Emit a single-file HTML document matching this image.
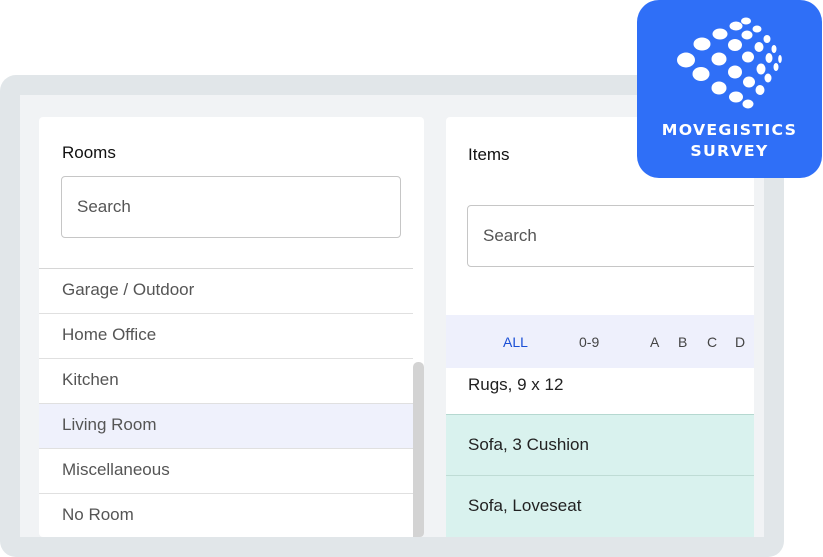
<!DOCTYPE html>
<html><head><meta charset="utf-8"><style>
*{margin:0;padding:0;box-sizing:border-box}
html,body{width:823px;height:557px;overflow:hidden}
body{background:#fff;position:relative;font-family:"Liberation Sans",Roboto,sans-serif}
.frame{position:absolute;left:0;top:75px;width:784px;height:482px;background:#e1e6e9;border-radius:16px}
.inner{position:absolute;left:20px;top:95px;width:744px;height:442px;background:#f1f3f5}
.card{position:absolute;background:#fff;border-radius:4px;overflow:hidden}
.l{left:39px;top:117px;width:385px;height:420px}
.r{left:446px;top:117px;width:308px;height:420px;border-radius:4px 0 0 0}
.t{position:absolute;font-size:17px;color:#111}
.search{position:absolute;border:1px solid #c6c6c6;border-radius:4px;font-size:17px;color:#555;padding-left:15px;display:flex;align-items:center}
.row{position:absolute;left:0;width:374px;height:45px;border-top:1px solid #e0e0e0;font-size:17px;color:#555;padding-left:23px;line-height:42px}
.sb{position:absolute;left:374px;top:245px;width:11px;height:180px;background:#d3d3d3;border-radius:5px 5px 0 0}
.f{position:absolute;top:198px;left:0;width:308px;height:53px;background:#eef0fc;font-size:14px;color:#444}
.f span{position:absolute;top:19px}
.ir{position:absolute;left:0;width:308px;font-size:17px;color:#222;padding-left:22px}
.logo{position:absolute;left:637px;top:0;width:185px;height:178px;background:#2f6ff7;border-radius:22px}
.lt{position:absolute;width:185px;text-align:center;color:#fff;font-weight:bold;font-size:15px;letter-spacing:1.2px;font-family:"DejaVu Sans","Liberation Sans",sans-serif;transform:scaleX(1.05)}
</style></head><body>
<div class="frame"></div>
<div class="inner"></div>
<div class="card l">
 <div class="t" style="left:23px;top:26px">Rooms</div>
 <div class="search" style="left:22px;top:59px;width:340px;height:62px">Search</div>
 <div class="row" style="top:151px;border-top-color:#d6d6d6">Garage / Outdoor</div>
 <div class="row" style="top:196px">Home Office</div>
 <div class="row" style="top:241px">Kitchen</div>
 <div class="row" style="top:286px;background:#eff1fc">Living Room</div>
 <div class="row" style="top:331px">Miscellaneous</div>
 <div class="row" style="top:376px">No Room</div>
 <div class="sb"></div>
</div>
<div class="card r">
 <div class="t" style="left:22px;top:28px">Items</div>
 <div class="search" style="left:21px;top:88px;width:300px;height:62px">Search</div>
 <div class="f"><span style="left:57px;color:#1a4fd6">ALL</span><span style="left:133px">0-9</span><span style="left:204px">A</span><span style="left:232px">B</span><span style="left:261px">C</span><span style="left:289px">D</span></div>
 <div class="ir" style="top:251px;height:47px;padding-top:7px">Rugs, 9 x 12</div>
 <div class="ir" style="top:297px;height:61px;background:#d9f2ee;border-top:1px solid #b5d8d0;line-height:60px">Sofa, 3 Cushion</div>
 <div class="ir" style="top:358px;height:62px;background:#d9f2ee;border-top:1px solid #bfdcd5;line-height:60px">Sofa, Loveseat</div>
</div>
<div class="logo">
<svg width="185" height="178" style="position:absolute;left:0;top:0" fill="#fff">
<g transform="translate(-637,0)">
<ellipse cx="686" cy="60" rx="9" ry="7.5"/>
<ellipse cx="702" cy="44" rx="8.5" ry="6.5"/><ellipse cx="701" cy="74" rx="8.5" ry="7"/>
<ellipse cx="720" cy="34" rx="7.5" ry="5.5"/><ellipse cx="719" cy="59" rx="7.5" ry="6.5"/><ellipse cx="719" cy="88" rx="7.5" ry="6.5"/>
<ellipse cx="736" cy="26" rx="6.5" ry="4.5"/><ellipse cx="735" cy="45" rx="7" ry="6"/><ellipse cx="735" cy="72" rx="7" ry="6.5"/><ellipse cx="736" cy="97" rx="7" ry="5.5"/>
<ellipse cx="746" cy="21" rx="5" ry="3.5"/><ellipse cx="747" cy="35" rx="5.5" ry="4.5"/><ellipse cx="748" cy="57" rx="6" ry="5.5"/><ellipse cx="749" cy="82" rx="6" ry="5.5"/><ellipse cx="748" cy="104" rx="5.5" ry="4.5"/>
<ellipse cx="757" cy="29" rx="4.5" ry="3.5"/><ellipse cx="759" cy="47" rx="4.5" ry="5"/><ellipse cx="761" cy="69" rx="4.5" ry="5.5"/><ellipse cx="760" cy="90" rx="4.5" ry="5"/>
<ellipse cx="767" cy="39" rx="3.5" ry="4"/><ellipse cx="769" cy="58" rx="3.5" ry="5"/><ellipse cx="768" cy="78" rx="3.5" ry="4.5"/>
<ellipse cx="774" cy="49" rx="2.5" ry="4"/><ellipse cx="776" cy="67" rx="2.5" ry="4"/>
<ellipse cx="780" cy="59" rx="1.8" ry="4"/>
</g></svg>
<div class="lt" style="top:121px">MOVEGISTICS</div>
<div class="lt" style="top:142px">SURVEY</div>
</div>
</body></html>
